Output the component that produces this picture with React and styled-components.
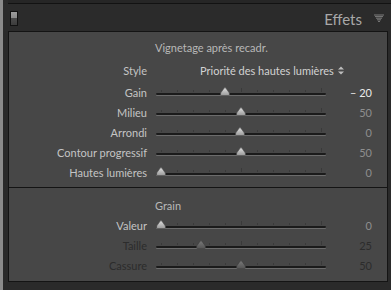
import React from "react";
import styled, { createGlobalStyle } from "styled-components";

const Global = createGlobalStyle`
  html, body { margin: 0; padding: 0; background: #2a2a2a; }
  body { font-family: Lato, "Liberation Sans", sans-serif; }
`;

const Page = styled.div`
  width: 391px;
  height: 290px;
  display: flex;
  overflow: hidden;
  background: #282828;
`;

const EdgeStrip = styled.div`
  width: 3px;
  background: #8b8b8b;
  flex-shrink: 0;
`;

const Main = styled.div`
  flex: 1;
  display: flex;
  flex-direction: column;
  background: #2a2a2a;
`;

const TopEdge = styled.div`
  height: 3px;
  background: #262626;
  border-bottom: 1px solid #121212;
  margin-left: 5px;
`;

const Header = styled.div`
  height: 27px;
  display: flex;
  align-items: center;
  padding: 0 7px 0 7px;
  background: #2b2b2b;
`;

const Switch = styled.div`
  width: 6px;
  height: 13px;
  border: 1px solid #111;
  background: linear-gradient(#9c9c9c 0, #8a8a8a 45%, #4a4a4a 50%, #3c3c3c 100%);
  margin-top: 2px;
`;

const Title = styled.div`
  margin-left: auto;
  font-size: 15px;
  color: #a8a8a8;
  margin-top: 2px;
`;

const Collapse = styled.svg`
  margin-left: 12px;
  margin-top: 1px;
`;

const Panel = styled.div`
  margin: 0 3px 0 5px;
  border: 1px solid #141414;
  background: #474747;
`;

const Section = styled.div`
  padding: ${p => p.$top}px 0 ${p => p.$bottom}px;
  border-bottom: ${p => (p.$divider ? "1px solid #141414" : "none")};
`;

const Row = styled.div`
  display: grid;
  grid-template-columns: 138px 170px 1fr;
  column-gap: 9px;
  padding-right: 15px;
  align-items: center;
  height: ${p => p.$h || 20}px;
  font-size: 11px;
`;

const Heading = styled.div`
  grid-column: 2 / 4;
  margin-left: -1px;
  color: #b8b8b8;
  white-space: nowrap;
`;

const Label = styled.div`
  text-align: right;
  white-space: nowrap;
  color: ${p => (p.$dim ? "#2c2c2c" : "#c4c4c4")};
`;

const Popup = styled.div`
  grid-column: 2 / 4;
  margin-left: 44px;
  color: #d2d2d2;
  white-space: nowrap;
  display: flex;
  align-items: center;
  gap: 4px;
`;

const Value = styled.div`
  text-align: right;
  white-space: nowrap;
  color: ${p => (p.$active ? "#eaeaea" : p.$dim ? "#2c2c2c" : "#8e8e8e")};
`;

const SliderBox = styled.div`
  position: relative;
  height: 20px;
`;

const Track = styled.div`
  position: absolute;
  left: 0;
  right: 0;
  top: 11px;
  height: 2px;
  border-radius: 2px;
  background: #1b1b1b;
  box-shadow: 0 1px 0 #6c6c6c;
`;

const Tick = styled.div`
  position: absolute;
  width: 1px;
  top: ${p => (p.$major ? 6 : 8)}px;
  height: ${p => (p.$major ? 4 : 2)}px;
  background: #3a3a3a;
`;

const Thumb = styled.svg`
  position: absolute;
  top: 5px;
  margin-left: -5px;
`;

const ticks = [0, 1, 2, 3, 4, 5, 6, 7, 8, 9, 10];

function Slider({ f, dim }) {
  return (
    <SliderBox>
      {ticks.map(i => (
        <Tick key={i} $major={i === 5 || i === 10} style={{ left: 5 + i * 16 }} />
      ))}
      <Track />
      <Thumb width="10" height="9" viewBox="0 0 10 9" style={{ left: 5 + f * 160 }}>
        <defs>
          <linearGradient id={dim ? "tgd" : "tg"} x1="0" y1="0" x2="0" y2="1">
            <stop offset="0" stopColor={dim ? "#7a7a7a" : "#e0e0e0"} />
            <stop offset="1" stopColor={dim ? "#555" : "#9a9a9a"} />
          </linearGradient>
        </defs>
        <path
          d="M1.5 8.5 Q0.5 8.5 0.5 7 L0.8 5.8 L4.2 1 Q5 0.2 5.8 1 L9.2 5.8 L9.5 7 Q9.5 8.5 8.5 8.5 Z"
          fill={`url(#${dim ? "tgd" : "tg"})`}
          stroke={dim ? "#3a3a3a" : "#4a4a4a"}
          strokeWidth="0.6"
        />
      </Thumb>
    </SliderBox>
  );
}

function SliderRow({ label, value, f, active, dim }) {
  return (
    <Row>
      <Label $dim={dim}>{label}</Label>
      <Slider f={f} dim={dim} />
      <Value $active={active} $dim={dim}>{value}</Value>
    </Row>
  );
}

const vignette = [
  { label: "Gain", value: "– 20", f: 0.4, active: true },
  { label: "Milieu", value: "50", f: 0.5 },
  { label: "Arrondi", value: "0", f: 0.495 },
  { label: "Contour progressif", value: "50", f: 0.5 },
  { label: "Hautes lumières", value: "0", f: 0 },
];

const grain = [
  { label: "Valeur", value: "0", f: 0 },
  { label: "Taille", value: "25", f: 0.25, dim: true },
  { label: "Cassure", value: "50", f: 0.5, dim: true },
];

function Dots() {
  const pts = [];
  const rows = [[0, 1, 2, 3, 4], [0.5, 1.5, 2.5, 3.5], [1, 2, 3], [1.5, 2.5], [2]];
  rows.forEach((r, y) => r.forEach(x => pts.push([x * 2 + 0.5, y * 1.6 + 0.5])));
  return (
    <Collapse width="10" height="8" viewBox="0 0 10 8">
      {pts.map(([x, y], i) => (
        <rect key={i} x={x} y={y} width="1" height="1" fill="#cccccc" />
      ))}
    </Collapse>
  );
}

export default function App() {
  return (
    <>
      <Global />
      <Page>
        <EdgeStrip />
        <Main>
          <TopEdge />
          <Header>
            <Switch />
            <Title>Effets</Title>
            <Dots />
          </Header>
          <Panel>
            <Section $top={4} $bottom={5} $divider>
              <Row $h={22}>
                <span />
                <Heading>Vignetage après recadr.</Heading>
              </Row>
              <Row $h={24}>
                <Label>Style</Label>
                <Popup>
                  Priorité des hautes lumières
                  <svg width="6" height="9" viewBox="0 0 6 9">
                    <path d="M0 3.5 L3 0.5 L6 3.5 Z M0 5.5 L3 8.5 L6 5.5 Z" fill="#bdbdbd" />
                  </svg>
                </Popup>
              </Row>
              {vignette.map(r => (
                <SliderRow key={r.label} {...r} />
              ))}
            </Section>
            <Section $top={7} $bottom={6}>
              <Row>
                <span />
                <Heading>Grain</Heading>
              </Row>
              {grain.map(r => (
                <SliderRow key={r.label} {...r} />
              ))}
            </Section>
          </Panel>
        </Main>
      </Page>
    </>
  );
}
